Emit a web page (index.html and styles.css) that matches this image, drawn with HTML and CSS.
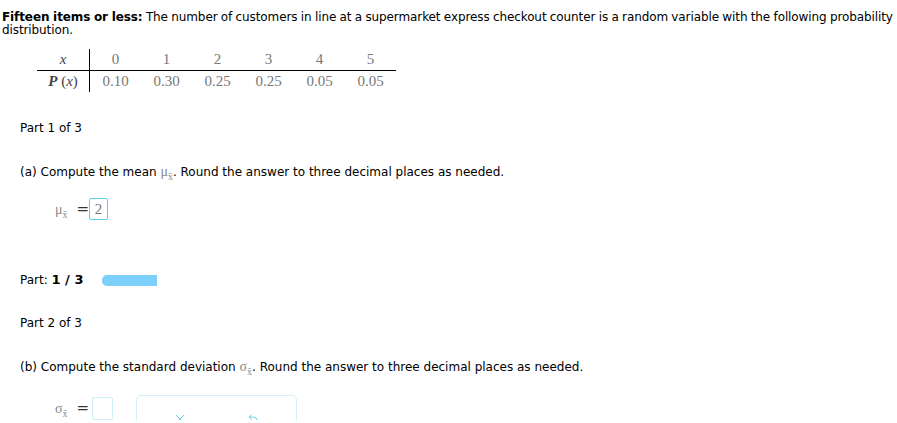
FILE: index.html
```html
<!DOCTYPE html>
<html lang="en">
<head>
    <meta charset="UTF-8">
    <title>Fifteen items or less</title>
    <link rel="stylesheet" href="styles.css">
</head>
<body>
    <p class="intro"><b>Fifteen items or less:</b> The number of customers in line at a supermarket express checkout counter is a random variable with the following probability distribution.</p>

    <table class="dist">
        <tr class="head">
            <td class="label"><i>x</i></td>
            <td>0</td><td>1</td><td>2</td><td>3</td><td>4</td><td>5</td>
        </tr>
        <tr>
            <td class="label"><b><i>P</i></b> (<i>x</i>)</td>
            <td>0.10</td><td>0.30</td><td>0.25</td><td>0.25</td><td>0.05</td><td>0.05</td>
        </tr>
    </table>

    <div class="part">
        <p class="part-title">Part 1 of 3</p>
        <p class="prompt">(a) Compute the mean <span class="sym">μ<sub>x̄</sub></span>. Round the answer to three decimal places as needed.</p>
        <div class="answer answer-a">
            <span class="sym">μ<sub>x̄</sub></span>
            <span class="eq">=</span>
            <span class="box filled">2</span>
        </div>
    </div>

    <div class="progress-row">
        <span>Part: <strong>1 / 3</strong></span>
        <div class="bar"></div>
    </div>

    <div class="part">
        <p class="part-title">Part 2 of 3</p>
        <p class="prompt">(b) Compute the standard deviation <span class="sym">σ<sub>x̄</sub></span>. Round the answer to three decimal places as needed.</p>
        <div class="answer answer-b">
            <span class="sym">σ<sub>x̄</sub></span>
            <span class="eq">=</span>
            <span class="box empty"></span>
            <div class="keypad">
                <svg class="key" width="10" height="10" viewBox="0 0 10 10">
                    <path d="M1 1 L9 9 M9 1 L1 9" fill="none" stroke="#72cce4" stroke-width="1"/>
                </svg>
                <svg class="key" width="10" height="12" viewBox="0 0 10 12">
                    <path d="M3.5 0.5 L1 3 L3.5 5.5 M1 3 H5.5 A3.5 3.5 0 0 1 5.5 10 H4" fill="none" stroke="#72cce4" stroke-width="1"/>
                </svg>
            </div>
        </div>
    </div>
</body>
</html>
```

FILE: styles.css
```css
body {
    margin: 0;
    padding: 11px 2px 0;
    font-family: "DejaVu Sans", Verdana, sans-serif;
    font-size: 12px;
    line-height: 13px;
    color: #000;
    background: #fff;
    overflow: hidden;
}

p {
    margin: 0;
}

.intro {
    letter-spacing: -0.1px;
    word-spacing: -0.35px;
}

/* probability table */
.dist {
    border-collapse: collapse;
    margin: 12px 0 0 35px;
    font-family: "Liberation Serif", "Times New Roman", serif;
    font-size: 15px;
    line-height: 15px;
    color: #777;
}

.dist td {
    width: 51px;
    height: 21px;
    padding: 0;
    text-align: center;
}

.dist .label {
    width: 52px;
    color: #444;
    border-right: 1px solid #000;
}

.dist .head td {
    border-bottom: 1px solid #000;
}

/* parts */
.part {
    padding-left: 18px;
}

.part-title {
    margin-top: 30px;
}

.prompt {
    margin-top: 30px;
}

.sym {
    font-family: "Liberation Serif", serif;
    font-size: 14px;
    color: #888;
}

.sym sub {
    font-size: 10px;
    line-height: 0;
}

.answer {
    display: flex;
    align-items: center;
    height: 24px;
    padding-left: 35px;
}

.answer-a {
    margin-top: 18px;
}

.answer-b {
    margin-top: 22px;
}

.eq {
    margin-left: 9px;
    font-size: 15px;
    color: #333;
}

.box {
    width: 17px;
    height: 20px;
    border: 1px solid #5ad3f0;
    border-radius: 2px;
    font-family: "Liberation Serif", serif;
    font-size: 15px;
    color: #777;
    display: flex;
    align-items: center;
    justify-content: center;
}

.box.empty {
    width: 19px;
    height: 21px;
    margin-left: 3px;
    border-color: #cdeff6;
}

.keypad {
    align-self: flex-start;
    width: 161px;
    height: 40px;
    margin: -1px 0 0 23px;
    padding: 18px 38px 0 38px;
    border: 1px solid #d3f2f8;
    border-radius: 5px;
    box-sizing: border-box;
    display: flex;
    justify-content: space-between;
    align-items: flex-start;
}

/* progress */
.progress-row {
    display: flex;
    align-items: center;
    gap: 19px;
    height: 14px;
    margin-top: 52px;
    padding-left: 18px;
}

.progress-row strong {
    font-size: 13px;
}

.bar {
    width: 55px;
    height: 11px;
    background: #7dd0fc;
    border-radius: 5px 0 0 5px;
}
```
